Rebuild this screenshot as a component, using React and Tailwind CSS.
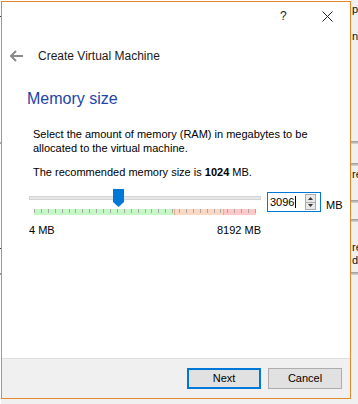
import React from "react";

const ticks = Array.from({ length: 33 }, (_, i) => Math.round((i * 221) / 32));

function Scale() {
  return (
    <svg width="222" height="6" viewBox="0 0 222 6" className="block">
      <rect x="0" y="0" width="140" height="6" fill="#c6f7c6" />
      <rect x="140" y="0" width="49" height="6" fill="#fbd8c4" />
      <rect x="189" y="0" width="33" height="6" fill="#fdc8c8" />
      {ticks.map((x, i) => (
        <rect key={i} x={x} y="0" width="1" height="4" fill="#a8a8a8" />
      ))}
      <rect x="140" y="0" width="1" height="6" fill="#e6b08a" />
      <rect x="189" y="0" width="1" height="6" fill="#eaa6a6" />
    </svg>
  );
}

function SpinBox() {
  return (
    <div className="mt-[3px] ml-[6px] flex h-[20px] w-[54px] items-center border border-[#0078d7] bg-white">
      <span className="ml-[2px] text-[11px] leading-[14px] text-black">3096</span>
      <span className="ml-[1px] h-[12px] w-px bg-black" />
      <div className="ml-auto mr-[4px] flex h-[16px] w-[11px] flex-col border border-[#acacac] bg-[#e8e8e8]">
        <div className="flex flex-1 items-center justify-center border-b border-[#acacac]">
          <svg width="5" height="3" viewBox="0 0 5 3"><path d="M2.5 0 L5 3 L0 3 Z" fill="#333" /></svg>
        </div>
        <div className="flex flex-1 items-center justify-center">
          <svg width="5" height="3" viewBox="0 0 5 3"><path d="M0 0 L5 0 L2.5 3 Z" fill="#333" /></svg>
        </div>
      </div>
    </div>
  );
}

export default function App() {
  return (
    <div className="flex h-[404px] w-[358px] overflow-hidden bg-white font-['Liberation_Sans',Arial,sans-serif] text-black">
      <div className="relative w-px">
        <div className="absolute left-0 top-[16px] h-px w-px bg-[#333]" />
        <div className="absolute left-0 top-[142px] h-[2px] w-px bg-[#aaa]" />
        <div className="absolute left-0 top-[248px] h-px w-px bg-[#333]" />
        <div className="absolute left-0 top-[273px] h-[2px] w-px bg-[#999]" />
      </div>

      <div className="flex w-[350px] flex-col">
        <div className="h-px" />
        <div className="flex h-[398px] flex-col border border-[#e3892b]">
          <div className="flex flex-1 flex-col bg-white">
            <div className="flex h-[30px] items-start">
              <span className="ml-[278px] mt-[6px] text-[12px] leading-[16px] text-[#222]">?</span>
              <svg className="ml-[35px] mt-[9px]" width="11" height="11" viewBox="0 0 11 11">
                <path d="M0.5 0.5 L10.5 10.5 M10.5 0.5 L0.5 10.5" stroke="#222" strokeWidth="1" />
              </svg>
            </div>

            <div className="mt-[14px] flex h-[20px] items-center">
              <svg className="ml-[8px]" width="13" height="12" viewBox="0 0 13 12">
                <path d="M1 6 H13 M6 1 L1 6 L6 11" stroke="#8a8a8a" strokeWidth="2" fill="none" />
              </svg>
              <span className="ml-[15px] text-[12px] leading-[16px] text-[#1a1a1a]">Create Virtual Machine</span>
            </div>

            <div className="ml-[25px] mt-[23px] text-[16px] leading-[20px] text-[#1d44a8]">Memory size</div>

            <div className="ml-[31px] mt-[18px] text-[11px] leading-[14px]">
              <p>Select the amount of memory (RAM) in megabytes to be</p>
              <p>allocated to the virtual machine.</p>
              <p className="mt-[10px]">
                The recommended memory size is <b>1024</b> MB.
              </p>
            </div>

            <div className="ml-[27px] mt-[10px] flex items-start">
              <div className="relative h-[26px] w-[232px]">
                <div className="mt-[7px] h-[4px] w-[232px] border border-[#d4d4d4] bg-[#e7e7e7]" />
                <div className="ml-[5px] mt-[9px]">
                  <Scale />
                </div>
                <svg className="absolute left-[84px] top-0" width="12" height="18" viewBox="0 0 12 18">
                  <path d="M0 0 H11 V13 L5.5 18 L0 13 Z" fill="#0078d7" />
                </svg>
              </div>
              <SpinBox />
              <span className="ml-[5px] mt-[9px] text-[11px] leading-[14px]">MB</span>
            </div>

            <div className="ml-[27px] mt-[8px] flex w-[232px] justify-between text-[11px] leading-[14px]">
              <span>4 MB</span>
              <span>8192 MB</span>
            </div>
          </div>

          <div className="flex h-[40px] justify-end gap-[7px] border-t border-[#dfdfdf] bg-[#f0f0f0] pr-[8px] pt-[9px]">
            <button className="flex h-[21px] w-[74px] items-center justify-center border-2 border-[#0078d7] bg-[#e1e1e1] text-[11px]">
              Next
            </button>
            <button className="flex h-[21px] w-[74px] items-center justify-center border border-[#adadad] bg-[#e1e1e1] text-[11px]">
              Cancel
            </button>
          </div>
        </div>
        <div className="flex-1 bg-[#f0f0f0]" />
      </div>

      <div className="relative flex-1 bg-[#f0f0f0] text-[11px] leading-[12px] text-[#111]">
        <span className="absolute left-[1px] top-[3px] whitespace-nowrap">pa</span>
        <span className="absolute left-[1px] top-[30px] whitespace-nowrap">na</span>
        <div className="absolute left-0 top-[141px] h-[3px] w-full bg-gradient-to-b from-[#9a9a9a] to-[#d8d8d8]" />
        <div className="absolute left-0 top-[163px] h-[3px] w-full bg-gradient-to-b from-[#9a9a9a] to-[#d8d8d8]" />
        <span className="absolute left-[1px] top-[168px] whitespace-nowrap">re</span>
        <div className="absolute left-0 top-[200px] h-[3px] w-full bg-gradient-to-b from-[#9a9a9a] to-[#d8d8d8]" />
        <div className="absolute left-0 top-[219px] h-[3px] w-full bg-gradient-to-b from-[#9a9a9a] to-[#d8d8d8]" />
        <span className="absolute left-[1px] top-[241px] whitespace-nowrap">re</span>
        <span className="absolute left-[1px] top-[254px] whitespace-nowrap">d g</span>
        <div className="absolute left-0 top-[272px] h-[3px] w-full bg-gradient-to-b from-[#9a9a9a] to-[#d8d8d8]" />
      </div>
    </div>
  );
}
